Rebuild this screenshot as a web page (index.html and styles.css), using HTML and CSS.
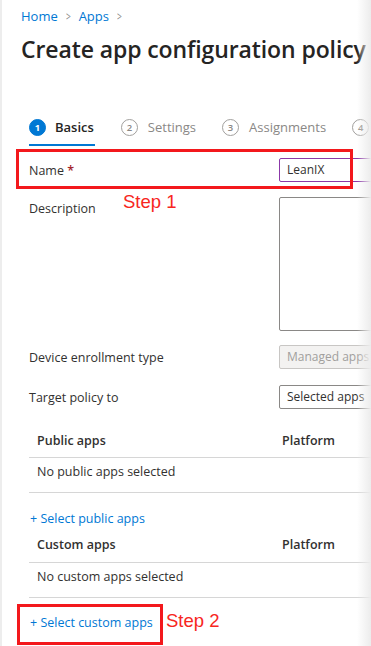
FILE: index.html
```html
<!DOCTYPE html>
<html>
<head>
<meta charset="utf-8">
<link rel="stylesheet" href="styles.css">
</head>
<body>
<div class="page">
  <nav class="crumbs">
    <a class="crumb">Home</a><span class="sep">&gt;</span><a class="crumb">Apps</a><span class="sep">&gt;</span>
  </nav>
  <h1 class="title">Create app configuration policy</h1>

  <div class="tabs">
    <div class="tab active"><span class="num">1</span><span class="tlabel">Basics</span></div>
    <div class="tab"><span class="num">2</span><span class="tlabel">Settings</span></div>
    <div class="tab"><span class="num">3</span><span class="tlabel">Assignments</span></div>
    <div class="tab"><span class="num">4</span><span class="tlabel">Review</span></div>
  </div>

  <div class="form">
    <div class="row row-name">
      <label class="lbl">Name <span class="req">*</span></label>
      <div class="input focus">LeanIX</div>
    </div>
    <div class="row row-desc">
      <label class="lbl">Description</label>
      <div class="textarea"></div>
    </div>
    <div class="row row-sel">
      <label class="lbl">Device enrollment type</label>
      <div class="input disabled">Managed apps</div>
    </div>
    <div class="row row-sel">
      <label class="lbl">Target policy to</label>
      <div class="input">Selected apps</div>
    </div>
  </div>

  <div class="table">
    <div class="thead"><span class="c1">Public apps</span><span class="c2">Platform</span></div>
    <div class="trow">No public apps selected</div>
  </div>
  <a class="add add-public">+ Select public apps</a>

  <div class="table">
    <div class="thead short"><span class="c1">Custom apps</span><span class="c2">Platform</span></div>
    <div class="trow">No custom apps selected</div>
  </div>
  <a class="add add-custom">+ Select custom apps</a>

  <div class="mark mark1"></div>
  <div class="step step1">Step 1</div>
  <div class="mark mark2"></div>
  <div class="step step2">Step 2</div>
</div>
<div class="fade"></div>
</body>
</html>
```
FILE: styles.css
```css
html, body {
  margin: 0;
  padding: 0;
  background: #fff;
  overflow: hidden;
  width: 371px;
  height: 646px;
}
body {
  font-family: "Open Sans", "Noto Sans", sans-serif;
  color: #323130;
  border-left: 2px solid #ededed;
  box-sizing: border-box;
  position: relative;
}
.page {
  position: relative;
  width: 460px;
  padding-left: 19px;
  box-sizing: border-box;
}
.crumbs {
  display: flex;
  align-items: center;
  height: 20px;
  padding-top: 6px;
  font-size: 13px;
}
.crumb { color: #0078d4; }
.sep {
  color: #8a8886;
  margin: 0 7px 0 7px;
  font-size: 12px;
  transform: scaleX(0.7);
}
.title {
  margin: 8px 0 0 0;
  font-size: 23px;
  line-height: 30px;
  font-weight: 600;
  color: #252423;
  white-space: nowrap;
  letter-spacing: -0.1px;
}
.tabs {
  display: flex;
  margin-top: 46px;
  padding-left: 8px;
  height: 36px;
  gap: 26px;
}
.tab {
  display: flex;
  align-items: center;
  gap: 10px;
  height: 34px;
  color: #8a8886;
  font-size: 13px;
  white-space: nowrap;
}
.tab.active {
  color: #252423;
  font-weight: 600;
  border-bottom: 2px solid #0078d4;
  padding-right: 1px;
  gap: 9px;
}
.num {
  width: 15px;
  height: 15px;
  border-radius: 50%;
  border: 1px solid #a19f9d;
  color: #8a8886;
  font-size: 9.5px;
  font-weight: 600;
  display: flex;
  align-items: center;
  justify-content: center;
}
.tab.active .num {
  background: #0078d4;
  border-color: #0078d4;
  color: #fff;
  font-weight: 700;
}
.form {
  margin-top: 4px;
  padding-left: 8px;
  display: flex;
  flex-direction: column;
}
.row {
  display: grid;
  grid-template-columns: 250px 1fr;
  font-size: 12.5px;
}
.lbl { display: block; }
.req { color: #a4262c; font-weight: 600; }
.row-name { height: 24px; align-items: center; margin-top: 8px; }
.row-desc { margin-top: 15px; }
.row-desc .lbl { margin-top: 3px; }
.row-sel { align-items: center; margin-top: 16px; }
.row-desc + .row-sel { margin-top: 14px; }
.input {
  height: 24px;
  box-sizing: border-box;
  border: 1px solid #8a8886;
  border-radius: 2px;
  padding: 0 7px;
  line-height: 22px;
  font-size: 12px;
  color: #323130;
  white-space: nowrap;
}
.input.focus { border-color: #8b38a8; }
.input.disabled {
  background: #f3f2f1;
  border-color: #c8c6c4;
  color: #a19f9d;
}
.textarea {
  height: 134px;
  box-sizing: border-box;
  border: 1px solid #8a8886;
  border-radius: 2px;
}
.table {
  margin-left: 8px;
  font-size: 12.5px;
}
.thead {
  display: grid;
  grid-template-columns: 245px 1fr;
  height: 34px;
  align-items: center;
  font-weight: 600;
  border-bottom: 1px solid #d6d6d6;
  margin-top: 14px;
}
.thead.short { margin-top: 0; height: 36px; }
.thead span { padding-left: 8px; }
.trow {
  height: 34px;
  line-height: 28px;
  padding-left: 8px;
  border-bottom: 1px solid #d6d6d6;
}
.add {
  display: block;
  color: #0078d4;
  font-size: 12.5px;
  margin-left: 9px;
  height: 16px;
  line-height: 16px;
}
.add-public { margin-top: 18px; margin-bottom: -1px; }
.add-custom { margin-top: 17px; }
.mark {
  position: absolute;
  border: 3px solid #f3181c;
  box-sizing: border-box;
}
.mark1 { left: 14px; top: 149px; width: 337px; height: 40px; }
.mark2 { left: 15px; top: 604px; width: 146px; height: 41px; }
.step {
  position: absolute;
  color: #f7261e;
  font-family: "Liberation Sans", Arial, sans-serif;
  font-size: 18.5px;
  line-height: 20px;
}
.step1 { left: 121px; top: 192px; }
.step2 { left: 164px; top: 611px; }
.fade {
  position: absolute;
  top: 0;
  right: 0;
  width: 14px;
  height: 646px;
  background: linear-gradient(to right, rgba(240,240,240,0), #ececec);
}
```
